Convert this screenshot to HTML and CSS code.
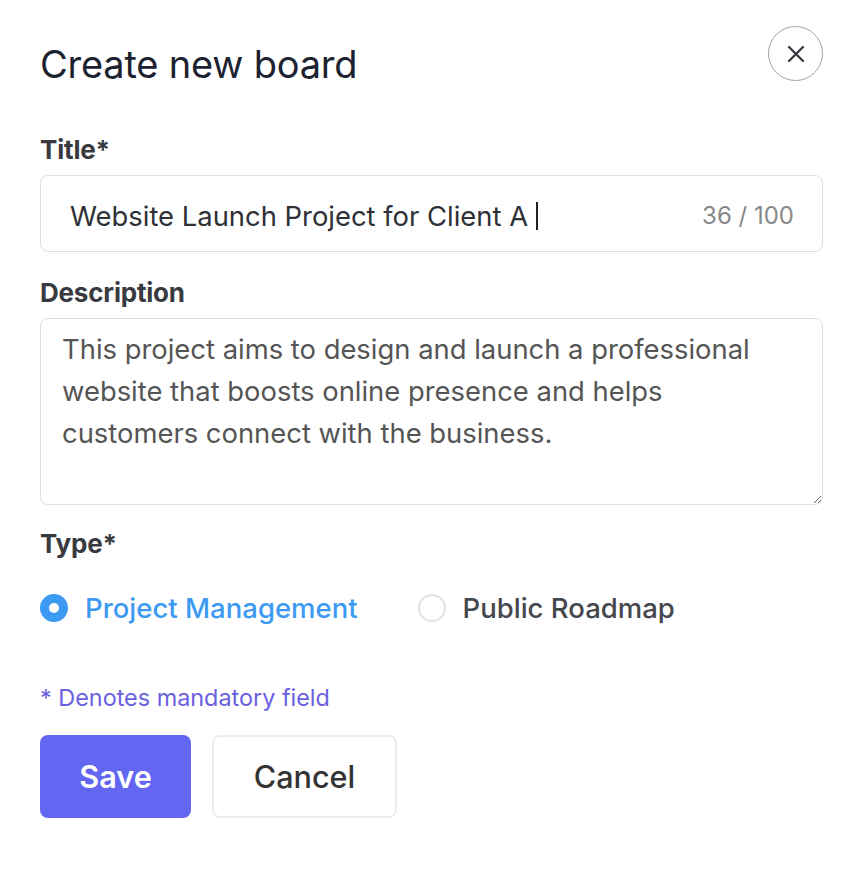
FILE: index.html
```html
<!DOCTYPE html>
<html lang="en">
<head>
<meta charset="utf-8">
<title>Create new board</title>
<link rel="stylesheet" href="styles.css">
</head>
<body>
<div class="modal">
  <header class="modal-head">
    <h1 class="modal-title">Create new board</h1>
    <button class="close-btn" type="button" aria-label="Close">
      <svg width="20" height="20" viewBox="0 0 20 20" fill="none" stroke="#3a3d45" stroke-width="2.4" stroke-linecap="round"><path d="M3 3L17 17M17 3L3 17"/></svg>
    </button>
  </header>

  <form class="form">
    <div class="field">
      <label class="label">Title*</label>
      <div class="input">
        <span class="input-text">Website Launch Project for Client A<span class="caret"></span></span>
        <span class="count">36 / 100</span>
      </div>
    </div>

    <div class="field">
      <label class="label">Description</label>
      <textarea class="textarea">This project aims to design and launch a professional website that boosts online presence and helps customers connect with the business.</textarea>
    </div>

    <div class="field">
      <label class="label">Type*</label>
      <div class="radios">
        <label class="radio checked"><span class="dot"></span>Project Management</label>
        <label class="radio"><span class="dot"></span>Public Roadmap</label>
      </div>
    </div>

    <p class="note">* Denotes mandatory field</p>

    <div class="actions">
      <button class="btn btn-primary" type="button">Save</button>
      <button class="btn btn-secondary" type="button">Cancel</button>
    </div>
  </form>
</div>
</body>
</html>
```

FILE: styles.css
```css
* { box-sizing: border-box; }
html, body { margin: 0; background: #ffffff; }
body {
  font-family: Inter, "Noto Sans", "Liberation Sans", sans-serif;
  color: #333;
}
.modal {
  width: 860px;
  padding: 22px 37px 40px 40px;
}
.modal-head {
  display: flex;
  justify-content: space-between;
  align-items: flex-start;
}
.modal-title {
  margin: 20px 0 0;
  font-size: 38px;
  font-weight: 400;
  line-height: 44px;
  color: #1d2230;
  letter-spacing: -0.2px;
}
.close-btn {
  width: 55px;
  height: 55px;
  border-radius: 50%;
  border: 1px solid #a3a3a3;
  background: #fff;
  display: flex;
  align-items: center;
  justify-content: center;
  padding: 0;
  margin-top: 4px;
}
.form { margin-top: 49px; }
.field { display: flex; flex-direction: column; }
.label {
  font-size: 26px;
  font-weight: 700;
  color: #383a40;
  line-height: 30px;
  margin-bottom: 10px;
  letter-spacing: -0.2px;
}
.input {
  height: 77px;
  border: 1.5px solid #dedede;
  border-radius: 8px;
  display: flex;
  align-items: center;
  justify-content: space-between;
  padding: 4px 28px 0 29px;
  margin-bottom: 26px;
}
.input-text {
  font-size: 27.4px;
  color: #2e3036;
  display: flex;
  align-items: center;
}
.caret {
  display: inline-block;
  width: 2px;
  height: 28px;
  background: #222;
  margin-left: 8px;
}
.count { font-size: 24px; color: #888; }
.textarea {
  height: 187px;
  border: 1.5px solid #dedede;
  border-radius: 8px;
  padding: 9px 21px;
  font-family: inherit;
  font-size: 27.4px;
  line-height: 42px;
  color: #555;
  resize: vertical;
  margin-bottom: 24px;
}
.radios {
  display: flex;
  align-items: center;
  gap: 60px;
  margin-top: 22px;
}
.radio {
  display: flex;
  align-items: center;
  gap: 17px;
  font-size: 27.5px;
  font-weight: 500;
  color: #45474d;
}
.radio .dot {
  width: 28px;
  height: 28px;
  border-radius: 50%;
  border: 2px solid #e2e2e2;
  background: #fff;
}
.radio.checked { color: #3c9af2; }
.radio.checked .dot {
  border: 9px solid #3c9af2;
}
.note {
  margin: 58px 0 0;
  font-size: 23.4px;
  color: #6a5fdf;
}
.actions {
  display: flex;
  gap: 21px;
  margin-top: 23px;
}
.btn {
  height: 83px;
  border-radius: 8px;
  font-family: inherit;
  font-size: 30.6px;
  padding: 0;
}
.btn-primary {
  width: 151px;
  background: #6366f1;
  border: none;
  color: #fff;
  font-weight: 600;
}
.btn-secondary {
  width: 185px;
  background: #fff;
  border: 2px solid #ececec;
  color: #333;
  font-weight: 500;
}
```
